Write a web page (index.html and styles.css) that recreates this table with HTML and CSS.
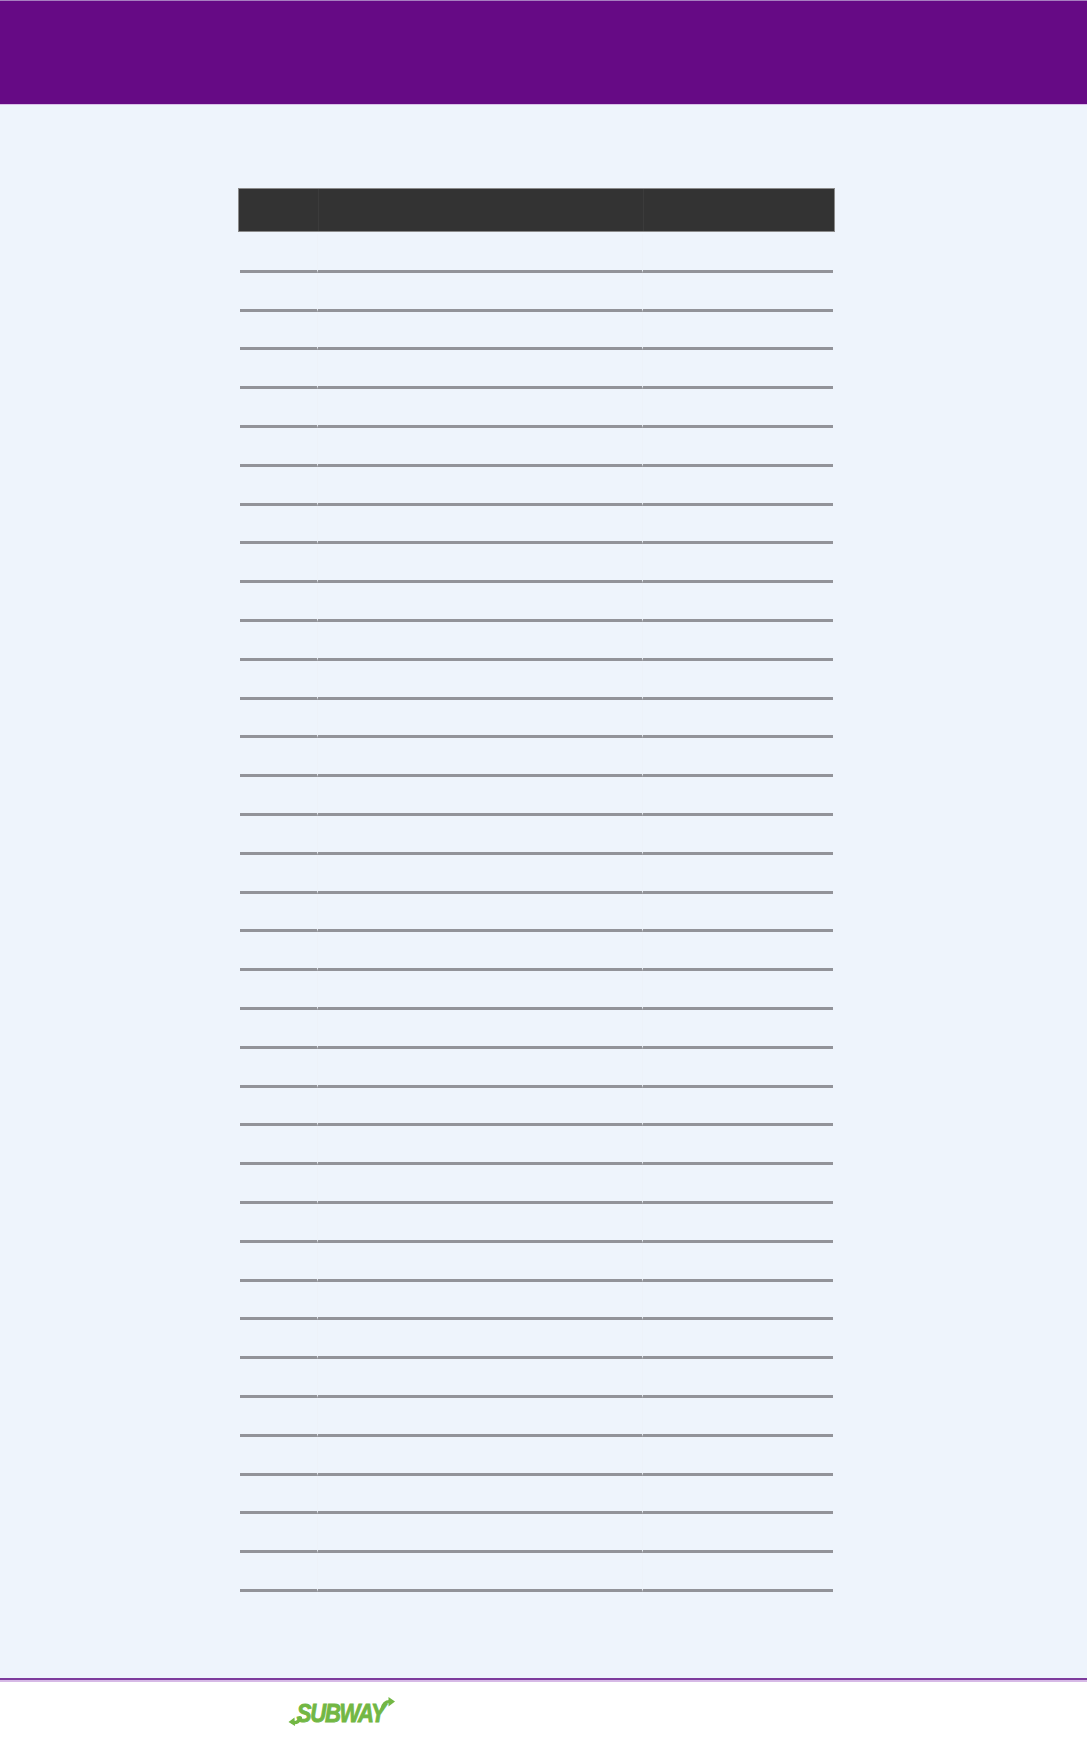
FILE: index.html
```html
<!DOCTYPE html>
<html lang="en">
<head>
<meta charset="utf-8">
<title>Sheet</title>
<link rel="stylesheet" href="styles.css">
</head>
<body>
<header class="topbar"></header>
<main class="content">
  <div class="sheet">
    <div class="sheet-head">
      <div class="hcell c1"></div>
      <div class="hcell c2"></div>
      <div class="hcell c3"></div>
    </div>
    <div class="sheet-body" id="rows"></div>
  </div>
</main>
<footer class="footer">
  <div class="logo">
    <svg class="arrow-l" width="14" height="26" viewBox="0 0 14 26">
      <path d="M12.5 17 Q10 22.5 5 21.5" fill="none" stroke="#72b744" stroke-width="3.2" stroke-linecap="round"/>
      <path d="M0.5 21 L6.5 16.5 L7 25 Z" fill="#72b744"/>
    </svg>
    <span class="logo-text">SUBWAY</span>
    <svg class="arrow-r" width="16" height="26" viewBox="0 0 16 26">
      <path d="M2 12 Q3.5 4.5 9.5 4.5" fill="none" stroke="#72b744" stroke-width="3.2" stroke-linecap="round"/>
      <path d="M15 4.5 L8.5 0 L8.5 9.5 Z" fill="#72b744"/>
    </svg>
  </div>
</footer>
<script>
  var body = document.getElementById('rows');
  var html = '';
  for (var i = 0; i < 35; i++) {
    html += '<div class="row"><div class="cell"></div><div class="cell"></div><div class="cell"></div></div>';
  }
  body.innerHTML = html;
</script>
</body>
</html>
```
FILE: styles.css
```css
* { box-sizing: border-box; }
html, body {
  margin: 0;
  padding: 0;
}
body {
  background: #eef4fc;
  font-family: "Liberation Sans", Arial, sans-serif;
}
.topbar {
  height: 105px;
  background: #660a85;
  border-top: 1px solid #a77fc0;
  border-bottom: 1px solid #d9c0e9;
}
.content {
  padding: 83px 0 86px 238px;
}
.sheet {
  width: 597px;
}
.sheet-head {
  display: grid;
  grid-template-columns: 79px 325px 1fr;
  height: 44px;
  background: #333333;
  border: 1px solid #8a8a8a;
}
.hcell + .hcell {
  border-left: 1px solid #3b3b3b;
}
.sheet-body {
  margin: 2px 2px 0;
}
.row {
  display: grid;
  grid-template-columns: 77px 325px 1fr;
  height: 38.8px;
}
.cell {
  border-bottom: 3px solid #929399;
}
.cell + .cell {
  border-left: 1px solid #edf2f9;
}
.footer {
  height: 81px;
  background: #ffffff;
  border-top: 2px solid #7d3b9c;
  box-shadow: inset 0 2px 0 #d6b9e6;
  padding: 19px 0 0 288px;
}
.logo {
  display: inline-flex;
  align-items: center;
  height: 28px;
}
.logo-text {
  display: inline-block;
  font-family: "Liberation Sans", Arial, sans-serif;
  font-weight: 700;
  font-style: italic;
  font-size: 26px;
  letter-spacing: -1.5px;
  -webkit-text-stroke: 0.9px #72b744;
  color: #72b744;
  line-height: 28px;
  transform: scaleX(0.85);
  margin: 0 -12px 0 -13px;
}
.arrow-l { margin-top: 2px; }
.arrow-r { margin-top: -6px; }
```
